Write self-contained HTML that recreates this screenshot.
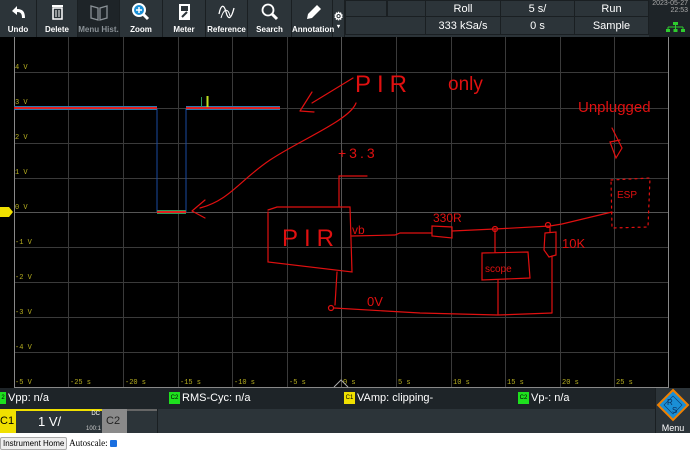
<!DOCTYPE html>
<html><head><meta charset="utf-8"><style>
*{margin:0;padding:0;box-sizing:border-box}
body{width:690px;height:469px;background:#fff;position:relative;overflow:hidden;font-family:"Liberation Sans",sans-serif}
#tb{position:absolute;left:0;top:0;width:690px;height:37px;background:#2c3439}
.btn{position:absolute;top:0;height:37px;color:#fff;font-size:8px;font-weight:bold;text-align:center;border-right:1px solid #1a1f22}
.btn span{position:absolute;bottom:3px;left:0;right:0}
.cell{position:absolute;color:#fff;font-size:11px;text-align:center;line-height:16px;border:1px solid #1a1f22;background:#2c3439}
#graph{position:absolute;left:0;top:37px;width:690px;height:351px;background:#000}
#stat{position:absolute;left:0;top:388px;width:690px;height:21px;background:#1e2428;color:#fff;font-size:11px}
#chan{position:absolute;left:0;top:409px;width:690px;height:24px;background:#2c3439}
.tag{display:inline-block;width:11px;height:12px;font-size:6px;color:#000;text-align:center;line-height:12px;vertical-align:middle;margin-right:2px}
</style></head><body>
<div id="tb">
<div class="btn" style="left:0;width:37px"><svg width="37" height="26"><path d="M12 11 L17 6 L17 9 C23 9 25 12 25 18 L22 18 C22 14 21 12 17 12 L17 15 Z" fill="#fff"/></svg><span>Undo</span></div>
<div class="btn" style="left:37px;width:41px"><svg width="41" height="26"><rect x="15" y="5" width="11" height="2" fill="#fff"/><rect x="16" y="8" width="9" height="11" fill="none" stroke="#fff" stroke-width="1.5"/><path d="M19 10v7M22 10v7" stroke="#fff"/></svg><span>Delete</span></div>
<div class="btn" style="left:78px;width:42px;background:#1e2428;color:#8a9196"><svg width="42" height="26"><path d="M13 6 L20 8 L20 20 L13 18Z M22 8 L29 6 L29 18 L22 20Z" fill="none" stroke="#8a9196" stroke-width="1.3"/></svg><span>Menu Hist.</span></div>
<div class="btn" style="left:120px;width:43px"><svg width="43" height="26"><circle cx="19" cy="10" r="6" fill="#1a8fd6" stroke="#fff" stroke-width="2"/><path d="M23 14 L28 19" stroke="#fff" stroke-width="3"/><path d="M16 10h6M19 7v6" stroke="#fff" stroke-width="1.5"/></svg><span>Zoom</span></div>
<div class="btn" style="left:163px;width:43px"><svg width="43" height="26"><rect x="16" y="4" width="11" height="16" fill="#fff"/><rect x="18" y="6" width="7" height="5" fill="#2c3439"/><path d="M19 17 L24 12" stroke="#2c3439" stroke-width="2"/></svg><span>Meter</span></div>
<div class="btn" style="left:206px;width:42px"><svg width="42" height="26"><path d="M13 14 C15 4 18 4 20 12 C22 20 25 20 28 8" fill="none" stroke="#fff" stroke-width="1.3"/><path d="M15 18 C18 8 22 8 24 16" fill="none" stroke="#fff" stroke-width="1"/></svg><span>Reference</span></div>
<div class="btn" style="left:248px;width:44px"><svg width="44" height="26"><circle cx="20" cy="10" r="5.5" fill="none" stroke="#fff" stroke-width="1.8"/><path d="M24 14 L29 19" stroke="#fff" stroke-width="3"/></svg><span>Search</span></div>
<div class="btn" style="left:292px;width:41px"><svg width="41" height="26"><path d="M15 19 L16 14 L25 5 L29 9 L20 18Z" fill="#fff"/></svg><span>Annotation</span></div>
<div class="btn" style="left:333px;width:12px;font-size:11px"><div style="margin-top:10px">⚙</div><div style="font-size:6px">▾</div></div>
<div class="cell" style="left:345px;top:0;width:42px;height:17px"></div>
<div class="cell" style="left:387px;top:0;width:39px;height:17px"></div>
<div class="cell" style="left:425px;top:0;width:76px;height:17px">Roll</div>
<div class="cell" style="left:500px;top:0;width:75px;height:17px">5 s/</div>
<div class="cell" style="left:574px;top:0;width:75px;height:17px">Run</div>
<div class="cell" style="left:345px;top:16px;width:81px;height:19px;line-height:18px"></div>
<div class="cell" style="left:425px;top:16px;width:76px;height:19px;line-height:18px">333 kSa/s</div>
<div class="cell" style="left:500px;top:16px;width:75px;height:19px;line-height:18px">0 s</div>
<div class="cell" style="left:574px;top:16px;width:75px;height:19px;line-height:18px">Sample</div>
<div style="position:absolute;left:649px;top:0;width:41px;height:37px;background:#1e2428;color:#aaa;font-size:7px;text-align:right;line-height:7px;padding-right:2px">2023-05-27<br>22:53
<svg width="20" height="10" style="position:absolute;right:4px;top:22px"><rect x="7" y="0" width="5" height="3" fill="#2ecc2e"/><path d="M9.5 3v2M2 5h15M2 5v2M9.5 5v2M17 5v2" stroke="#2ecc2e"/><rect x="0" y="7" width="4" height="3" fill="#2ecc2e"/><rect x="7.5" y="7" width="4" height="3" fill="#2ecc2e"/><rect x="15" y="7" width="4" height="3" fill="#2ecc2e"/></svg></div>
</div>

<div id="graph">
<svg width="690" height="351" viewBox="0 37 690 351" style="position:absolute;left:0;top:0">
<g stroke="#3a3a3a" stroke-width="1">
<path d="M68.5 37v350M123.5 37v350M178.5 37v350M232.5 37v350M287.5 37v350M396.5 37v350M451.5 37v350M505.5 37v350M560.5 37v350M614.5 37v350"/>
<path d="M14 72.5h654M14 108.5h654M14 143.5h654M14 178.5h654M14 247.5h654M14 282.5h654M14 317.5h654M14 352.5h654"/>
</g>
<path d="M341.5 37v350M14 212.5h654" stroke="#555"/>
<path d="M14.5 37v350.5H668.5V37" fill="none" stroke="#888"/>
<g fill="#b8b020" font-size="7" font-family="Liberation Mono,monospace">
<text x="15" y="69">4 V</text><text x="15" y="104">3 V</text><text x="15" y="139">2 V</text><text x="15" y="174">1 V</text><text x="15" y="209">0 V</text><text x="15" y="244">-1 V</text><text x="15" y="279">-2 V</text><text x="15" y="314">-3 V</text><text x="15" y="349">-4 V</text><text x="15" y="384">-5 V</text>
<text x="70" y="384">-25 s</text><text x="125" y="384">-20 s</text><text x="180" y="384">-15 s</text><text x="234" y="384">-10 s</text><text x="289" y="384">-5 s</text><text x="343" y="384">0 s</text><text x="398" y="384">5 s</text><text x="453" y="384">10 s</text><text x="507" y="384">15 s</text><text x="562" y="384">20 s</text><text x="616" y="384">25 s</text>
</g>
<path d="M334 387 L341 380 L348 387" fill="none" stroke="#aaa"/>
<path d="M0 207h9l4 5l-4 5h-9z" fill="#f0e000"/>
<g>
<path d="M157 108V212M186 108V212" stroke="#1a4aa0"/>
<rect x="14" y="106" width="143" height="4" fill="#2a7ab0"/><rect x="14" y="107" width="143" height="2" fill="#e02020"/>
<rect x="157" y="210" width="29" height="4" fill="#2a9a5a"/><rect x="157" y="211" width="29" height="2" fill="#e02020"/>
<rect x="186" y="106" width="94" height="4" fill="#2a7ab0"/><rect x="186" y="107" width="94" height="2" fill="#e02020"/>
<path d="M201.5 97v10" stroke="#2a9a5a"/><path d="M207.5 96v11" stroke="#c0e020" stroke-width="2"/>
</g>
<g fill="none" stroke="#e01010" stroke-width="1.2" stroke-linecap="round">
<path d="M353 78 L312 103 M300 111 L312 92 M300 111 L314 112"/>
<path d="M356 103 C350 120 300 140 270 160 C240 180 230 200 200 208 M192 211 L205 200 M192 211 L205 218"/>
<path d="M339 206 V176 H367"/>
<path d="M268 212 L268 262 L352 272 L350 207 L277 207 L268 210"/>
<path d="M352 236 L395 235 L400 233 L432 233 M432 226 L452 227 L452 238 L432 236 Z M452 231 L495 229 L550 226 L562 224 L612 212"/>
<circle cx="495" cy="229" r="2.5"/><circle cx="548" cy="225" r="2.5"/>
<path d="M495 229 V252 M482 253 L528 252 L530 278 L482 280 Z"/>
<path d="M545 233 L556 232 L556 255 L549 257 L544 250 Z M550 226 V232 M552 256 V313"/>
<path d="M337 272 L335 305"/><circle cx="331" cy="308" r="2.5"/>
<path d="M334 308 L420 313 L498 315 L552 313 M498 280 V314"/>
<path d="M612 128 L622 148 L616 158 L610 142 L620 140"/>
<path d="M611 180 L650 178 L648 227 L612 228 Z" stroke-dasharray="2 4"/>
</g>
<g fill="#e01010" font-family="Liberation Sans,sans-serif">
<text x="355" y="92" font-size="24" letter-spacing="6" transform="scale(1 1)">PIR</text>
<text x="448" y="90" font-size="19">only</text>
<text x="338" y="158" font-size="14" letter-spacing="3">+3.3</text>
<text x="282" y="246" font-size="24" letter-spacing="6">PIR</text>
<text x="352" y="234" font-size="12">vb</text>
<text x="433" y="222" font-size="12">330R</text>
<text x="485" y="272" font-size="10">scope</text>
<text x="562" y="248" font-size="13">10K</text>
<text x="367" y="306" font-size="13">0V</text>
<text x="578" y="112" font-size="15">Unplugged</text>
<text x="617" y="198" font-size="10">ESP</text>
</g>
</svg>
</div>

<div id="stat">
<div style="position:absolute;left:0;top:4px"><span class="tag" style="background:#1ee01e;width:6px">2</span>Vpp: n/a</div>
<div style="position:absolute;left:169px;top:4px"><span class="tag" style="background:#1ee01e">C2</span>RMS-Cyc: n/a</div>
<div style="position:absolute;left:344px;top:4px"><span class="tag" style="background:#f0e000">C1</span>VAmp: clipping-</div>
<div style="position:absolute;left:518px;top:4px"><span class="tag" style="background:#1ee01e">C2</span>Vp-: n/a</div>
</div>
<div id="chan">
<div style="position:absolute;left:0;top:0;width:16px;height:24px;background:#f0e000;font-size:11px;line-height:24px">C1</div>
<div style="position:absolute;left:16px;top:0;width:86px;height:24px;border-top:2px solid #f0e000;background:#2c3439;color:#fff"><span style="position:absolute;left:22px;top:3px;font-size:13px">1 V/</span><span style="position:absolute;right:2px;top:0;font-size:6px">DC</span><span style="position:absolute;right:1px;bottom:1px;font-size:6px;color:#ccc">100:1</span></div>
<div style="position:absolute;left:102px;top:0;width:25px;height:24px;background:#8a8a8a;color:#222;font-size:11px;line-height:24px;padding-left:4px">C2</div>
<div style="position:absolute;left:127px;top:0;width:30px;height:24px;border-top:2px solid #666;background:#2c3439"></div>
<div style="position:absolute;left:157px;top:0;width:500px;height:24px;background:#2c3439;border-left:1px solid #1a1f22"></div>
<div style="position:absolute;left:655px;top:-21px;width:35px;height:45px;border-left:1px solid #1a1f22;background:#2c3439">
<svg width="35" height="36" style="position:absolute;left:0;top:0"><path d="M17 2 L32 17 L17 32 L2 17Z" fill="#1a8fd6" stroke="#f08000" stroke-width="2"/><path d="M17 8 L26 17 L17 26 L8 17Z" fill="none" stroke="#0a4070" stroke-width="0.7"/><text x="11" y="17" font-size="8" fill="#0a3060">R</text><text x="16" y="25" font-size="8" fill="#0a3060">S</text></svg>
<div style="position:absolute;bottom:0;left:0;right:0;text-align:center;color:#fff;font-size:9px">Menu</div></div>
</div>
<div style="position:absolute;left:0;top:437px;font-family:'Liberation Serif',serif;font-size:9px;color:#000">
<span style="display:inline-block;border:1px solid #aaa;background:#eee;border-radius:2px;padding:1px 2px;font-family:'Liberation Sans',sans-serif;font-size:8px">Instrument Home</span>
 Autoscale: <span style="display:inline-block;width:7px;height:7px;background:#1a6fe0;border-radius:1px;vertical-align:middle"></span></div>
</body></html>
